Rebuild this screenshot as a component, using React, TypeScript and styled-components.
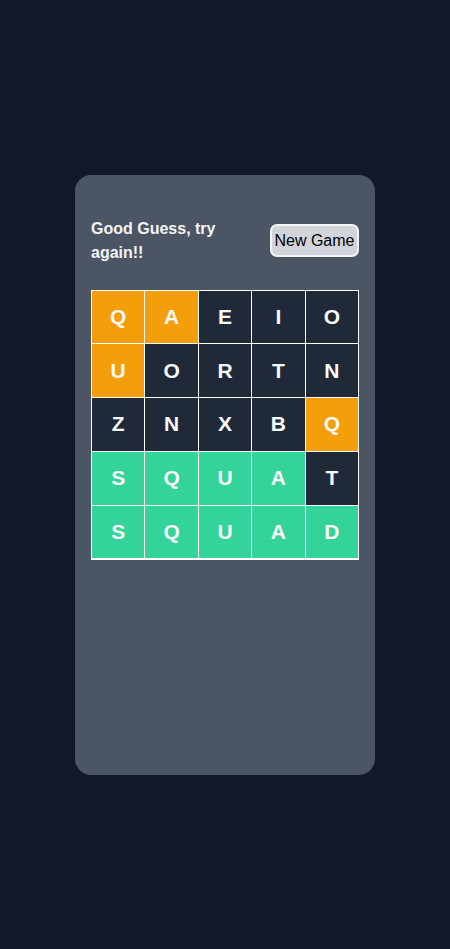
import React from "react";
import styled, { createGlobalStyle } from "styled-components";

const GlobalStyle = createGlobalStyle`
  html, body {
    margin: 0;
    padding: 0;
    background: #111827;
  }
  body {
    font-family: "Liberation Sans", Arial, sans-serif;
  }
`;

type TileState = "present" | "absent" | "correct";

const rows: { letter: string; state: TileState }[][] = [
  [
    { letter: "Q", state: "present" },
    { letter: "A", state: "present" },
    { letter: "E", state: "absent" },
    { letter: "I", state: "absent" },
    { letter: "O", state: "absent" },
  ],
  [
    { letter: "U", state: "present" },
    { letter: "O", state: "absent" },
    { letter: "R", state: "absent" },
    { letter: "T", state: "absent" },
    { letter: "N", state: "absent" },
  ],
  [
    { letter: "Z", state: "absent" },
    { letter: "N", state: "absent" },
    { letter: "X", state: "absent" },
    { letter: "B", state: "absent" },
    { letter: "Q", state: "present" },
  ],
  [
    { letter: "S", state: "correct" },
    { letter: "Q", state: "correct" },
    { letter: "U", state: "correct" },
    { letter: "A", state: "correct" },
    { letter: "T", state: "absent" },
  ],
  [
    { letter: "S", state: "correct" },
    { letter: "Q", state: "correct" },
    { letter: "U", state: "correct" },
    { letter: "A", state: "correct" },
    { letter: "D", state: "correct" },
  ],
];

const tileColors: Record<TileState, string> = {
  present: "#f59e0b",
  absent: "#1f2937",
  correct: "#34d399",
};

const Page = styled.div`
  min-height: 100vh;
  display: flex;
  align-items: center;
  justify-content: center;
`;

const Card = styled.div`
  width: 300px;
  height: 600px;
  box-sizing: border-box;
  background: #4b5563;
  border-radius: 16px;
  padding: 42px 16px 16px;
  display: flex;
  flex-direction: column;
`;

const Header = styled.div`
  display: flex;
  align-items: center;
  justify-content: space-between;
  gap: 8px;
  margin-bottom: 25px;
`;

const Message = styled.div`
  flex: 1;
  color: #f3f4f6;
  font-size: 16px;
  font-weight: 700;
  line-height: 24px;
`;

const NewGameButton = styled.button`
  flex: none;
  height: 33px;
  padding: 0 2.5px;
  background: #d1d5db;
  border: 2px solid #f3f4f6;
  border-radius: 7px;
  color: #000;
  font-family: "Liberation Sans", Arial, sans-serif;
  font-size: 16px;
  cursor: pointer;
`;

const Board = styled.div`
  display: grid;
  grid-template-columns: repeat(5, 1fr);
  grid-template-rows: repeat(5, 1fr);
  gap: 1px;
  padding: 1px;
  background: #ffffff;
  width: 268px;
  height: 270px;
  box-sizing: border-box;
`;

const Tile = styled.div<{ $state: TileState }>`
  background: ${(p) => tileColors[p.$state]};
  display: flex;
  align-items: center;
  justify-content: center;
  color: #f9fafb;
  font-size: 21px;
  font-weight: 700;
`;

export default function App() {
  return (
    <>
      <GlobalStyle />
      <Page>
        <Card>
          <Header>
            <Message>Good Guess, try again!!</Message>
            <NewGameButton>New Game</NewGameButton>
          </Header>
          <Board>
            {rows.flatMap((row, r) =>
              row.map((t, c) => (
                <Tile key={`${r}-${c}`} $state={t.state}>
                  {t.letter}
                </Tile>
              ))
            )}
          </Board>
        </Card>
      </Page>
    </>
  );
}
